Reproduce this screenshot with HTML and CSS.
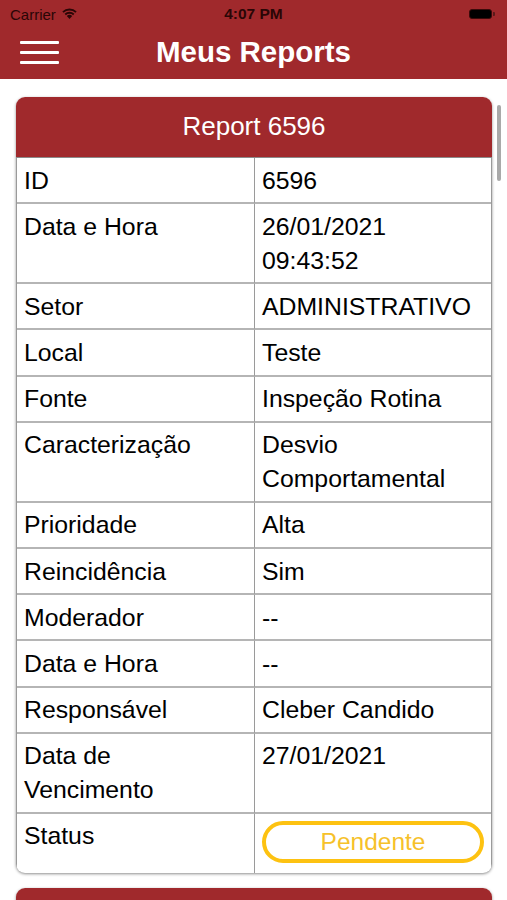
FILE: index.html
```html
<!DOCTYPE html>
<html lang="pt">
<head>
<meta charset="utf-8">
<title>Meus Reports</title>
<link rel="stylesheet" href="styles.css">
</head>
<body>
<div class="app">
  <header class="topbar">
    <div class="status">
      <div class="status-left">
        <span class="carrier">Carrier</span>
        <svg class="wifi" width="17" height="12" viewBox="0 0 17 12"><path d="M8.5 12 L5.8 9.1 A3.9 3.9 0 0 1 11.2 9.1 Z" fill="#2a0606"/><path d="M3.6 6.8 A7 7 0 0 1 13.4 6.8 L12.1 8.2 A5.1 5.1 0 0 0 4.9 8.2 Z" fill="#2a0606"/><path d="M1.3 4.4 A10.3 10.3 0 0 1 15.7 4.4 L14.4 5.8 A8.4 8.4 0 0 0 2.6 5.8 Z" fill="#2a0606"/></svg>
      </div>
      <span class="time">4:07 PM</span>
      <div class="battery"><span class="bat-body"></span><span class="bat-tip"></span></div>
    </div>
    <div class="navbar">
      <div class="burger"><span></span><span></span><span></span></div>
      <h1 class="title">Meus Reports</h1>
    </div>
  </header>
  <main class="content">
    <section class="card">
      <div class="card-head">Report 6596</div>
      <div class="grid">
        <div class="cell">ID</div><div class="cell">6596</div>
        <div class="cell">Data e Hora</div><div class="cell">26/01/2021<br>09:43:52</div>
        <div class="cell">Setor</div><div class="cell">ADMINISTRATIVO</div>
        <div class="cell">Local</div><div class="cell">Teste</div>
        <div class="cell">Fonte</div><div class="cell">Inspeção Rotina</div>
        <div class="cell">Caracterização</div><div class="cell">Desvio<br>Comportamental</div>
        <div class="cell">Prioridade</div><div class="cell">Alta</div>
        <div class="cell">Reincidência</div><div class="cell">Sim</div>
        <div class="cell">Moderador</div><div class="cell">--</div>
        <div class="cell">Data e Hora</div><div class="cell">--</div>
        <div class="cell">Responsável</div><div class="cell">Cleber Candido</div>
        <div class="cell">Data de<br>Vencimento</div><div class="cell">27/01/2021</div>
        <div class="cell cell-last">Status</div><div class="cell cell-last cell-status"><span class="pill">Pendente</span></div>
      </div>
    </section>
    <section class="card card-next">
      <div class="card-head"></div>
    </section>
    <div class="scrollbar"></div>
  </main>
</div>
</body>
</html>
```
FILE: styles.css
```css
* { box-sizing: border-box; }
html, body { margin: 0; padding: 0; }
body {
  width: 507px;
  height: 900px;
  overflow: hidden;
  background: #fff;
  font-family: "Liberation Sans", Arial, sans-serif;
  color: #000;
}
.app { display: flex; flex-direction: column; height: 900px; overflow: hidden; }
.topbar { background: #a0292c; height: 79px; flex: none; }
.status {
  height: 30px;
  display: flex;
  align-items: center;
  justify-content: space-between;
  padding: 0 10px 2px 10px;
  position: relative;
}
.status-left { display: flex; align-items: center; gap: 5px; }
.carrier { font-size: 15px; color: #2a0606; }
.wifi { margin-top: -2px; }
.time {
  position: absolute;
  left: 0; right: 0;
  text-align: center;
  font-size: 15.5px;
  font-weight: bold;
  color: #2a0606;
  pointer-events: none;
}
.battery { display: flex; align-items: center; gap: 1px; margin-right: 2px; }
.bat-body { width: 23px; height: 10px; background: #000; border-radius: 3px; border: 1px solid #3a0a0a; }
.bat-tip { width: 2px; height: 4px; background: #5a1a1a; border-radius: 0 1px 1px 0; }
.navbar {
  height: 49px;
  display: flex;
  align-items: center;
  position: relative;
  padding-left: 20px;
  padding-bottom: 4px;
}
.burger { display: flex; flex-direction: column; gap: 7px; width: 39px; }
.burger span { display: block; height: 3px; background: #fff; border-radius: 1px; }
.title {
  position: absolute;
  left: 0; right: 0; top: 4px;
  margin: 0;
  text-align: center;
  color: #fff;
  font-size: 29.5px;
  font-weight: bold;
  line-height: 36px;
  pointer-events: none;
}
.content { position: relative; padding: 18px 15px 0 16px; flex: 1; }
.card {
  border-radius: 9px;
  overflow: hidden;
  box-shadow: 0 1px 3px rgba(0,0,0,0.45);
  background: #fff;
}
.card-head {
  background: #a0292c;
  color: #fff;
  text-align: center;
  font-size: 26px;
  height: 61px;
  line-height: 58px;
  border-bottom: 1px solid #8a8a8a;
}
.grid {
  display: grid;
  grid-template-columns: 238px 1fr;
  border-left: 1px solid #9a9a9a;
  border-right: 1px solid #9a9a9a;
}
.cell {
  font-size: 24.8px;
  line-height: 34px;
  padding: 5.5px 7px 4.67px 7px;
  border-bottom: 2px solid #b5b5b5;
}
.cell:nth-child(odd) { border-right: 1.5px solid #9a9a9a; }
.cell-last { border-bottom: none; height: 59px; }
.cell-status { padding: 6px 7px 6px 7px; }
.pill {
  display: block;
  height: 42px;
  margin-top: 1px;
  border: 4px solid #fdc211;
  border-radius: 21px;
  color: #f6c12a;
  text-align: center;
  line-height: 34px;
  font-size: 24.5px;
}
.card-next { margin-top: 15px; }
.card-next .card-head { border-bottom: none; }
.scrollbar {
  position: absolute;
  left: 497px;
  top: 26px;
  width: 4px;
  height: 76px;
  border-radius: 2px;
  background: #a9a9a9;
}
```
